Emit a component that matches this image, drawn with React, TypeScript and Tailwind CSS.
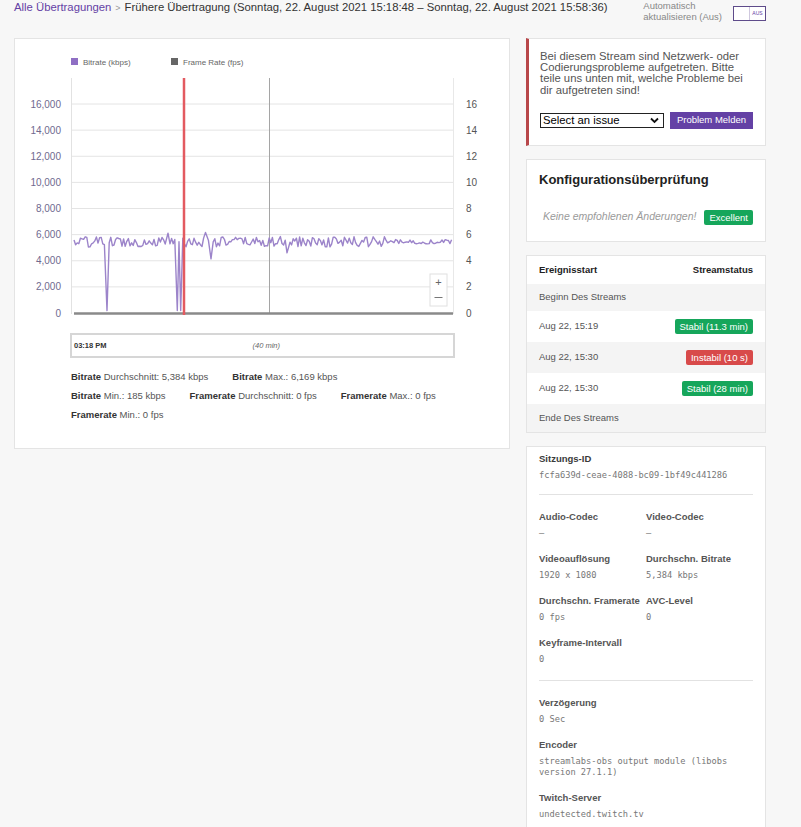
import React from "react";

type Pt = [number, number];

// deterministic noisy bitrate line
function buildSeries(): Pt[] {
  let s = 1234567;
  const rnd = () => {
    s = (s * 16807) % 2147483647;
    return s / 2147483647;
  };
  const special: Pt[] = [
    [107, 185],
    [168, 6120],
    [177.3, 180],
    [179, 5450],
    [180.7, 185],
    [205.5, 6169],
    [211, 4150],
    [287, 4600],
  ];
  const pts: Pt[] = [];
  for (let x = 74; x <= 452; x += 1.6) {
    if (special.some(([sx]) => Math.abs(sx - x) < 1.5)) continue;
    const amp = x > 385 ? 180 : 400;
    const v = 5450 + (rnd() - 0.5) * 2 * amp;
    pts.push([x, v]);
  }
  return [...pts, ...special].sort((a, b) => a[0] - b[0]);
}

const series = buildSeries();
const yOf = (v: number) => 313 - v * (209 / 16000);
const ticks = [0, 1, 2, 3, 4, 5, 6, 7, 8];

function BitrateChart() {
  const line = series.map(([x, v]) => `${x.toFixed(1)},${yOf(v).toFixed(1)}`).join(" ");
  return (
    <svg width={494} height={289} viewBox="15 39 494 289" className="block">
      <rect x={71} y={58} width={7} height={7} fill="#8f6fc4" />
      <text x={83} y={65} fontSize={8} fill="#666">Bitrate (kbps)</text>
      <rect x={171} y={58} width={7} height={7} fill="#666" />
      <text x={183} y={65} fontSize={8} fill="#666">Frame Rate (fps)</text>

      {ticks.slice(1).map((i) => (
        <line key={i} x1={71} x2={453} y1={313 - i * 26.125} y2={313 - i * 26.125} stroke="#e4e4e4" strokeWidth={1} />
      ))}
      <line x1={71.5} x2={71.5} y1={78} y2={314} stroke="#e2e2e2" />
      <line x1={453.5} x2={453.5} y1={78} y2={314} stroke="#e8e8e8" />
      <line x1={269.5} x2={269.5} y1={78} y2={314} stroke="#a5a5a5" />

      {ticks.map((i) => (
        <text key={"l" + i} x={61} y={313 - i * 26.125 + 3.5} fontSize={10} fill="#6f6a8f" textAnchor="end">
          {i === 0 ? "0" : `${i * 2},000`}
        </text>
      ))}
      {ticks.map((i) => (
        <text key={"r" + i} x={466} y={313 - i * 26.125 + 3.5} fontSize={10} fill="#555">
          {i * 2}
        </text>
      ))}

      <line x1={74} x2={453} y1={313.5} y2={313.5} stroke="#8a8a8a" strokeWidth={2.5} />
      <polyline points={line} fill="none" stroke="#9c84ca" strokeWidth={1.4} strokeLinejoin="round" />
      <line x1={184} x2={184} y1={78} y2={315} stroke="#e35a60" strokeWidth={2.5} />

      <rect x={430} y={274} width={17} height={32} fill="#fff" stroke="#e0e0e0" />
      <text x={438.5} y={285.5} fontSize={11} fill="#666" textAnchor="middle">+</text>
      <line x1={434.5} x2={442.5} y1={297.5} y2={297.5} stroke="#777" strokeWidth={1} />
    </svg>
  );
}

function Stat({ label, text }: { label: string; text: string }) {
  return (
    <span>
      <b className="font-bold text-[#333]">{label}</b>
      <span className="text-[#555]"> {text}</span>
    </span>
  );
}

function Badge({ tone, children }: { tone: "green" | "red"; children: React.ReactNode }) {
  return (
    <span
      className={
        tone === "green"
          ? "inline-block h-[15px] rounded-[2px] bg-[#16a65b] px-[5px] text-[9.5px] leading-[15px] text-white"
          : "inline-block h-[15px] rounded-[2px] bg-[#d84a4a] px-[5px] text-[9.5px] leading-[15px] text-white"
      }
    >
      {children}
    </span>
  );
}

function Field({ label, value, dark }: { label: string; value: React.ReactNode; dark?: boolean }) {
  return (
    <div className="mb-[13px]">
      <div className={dark ? "text-[9.5px] font-bold leading-[14px] text-[#3a3a3a]" : "text-[9.5px] font-bold leading-[14px] text-[#555]"}>
        {label}
      </div>
      <div className="mt-[4px] font-['DejaVu_Sans_Mono',monospace] text-[8.7px] leading-[11px] text-[#777]">{value}</div>
    </div>
  );
}

export default function App() {
  return (
    <div className="min-h-[827px] w-[801px] bg-[#f7f7f7] px-[14px] font-['Liberation_Sans',Arial,sans-serif]">
      {/* header */}
      <div className="flex h-[38px] w-[752px] items-start justify-between">
        <div className="text-[11.3px] leading-[14px]">
          <span className="text-[#6441a5]">Alle Übertragungen</span>
          <span className="mx-[4px] text-[9px] text-[#999]">&gt;</span>
          <span className="text-[#333]">Frühere Übertragung (Sonntag, 22. August 2021 15:18:48 – Sonntag, 22. August 2021 15:58:36)</span>
        </div>
        <div className="flex items-start gap-[11px]">
          <div className="mt-[1px] text-[9.5px] leading-[10.5px] text-[#888]">
            Automatisch
            <br />
            aktualisieren (Aus)
          </div>
          <div className="mt-[6px] flex h-[15px] w-[33px] border border-[#5e4b8a] bg-white">
            <div className="w-[15px]" />
            <div className="flex flex-1 items-center justify-center border-l border-[#cfc8de] text-[5px] text-[#6441a5]">AUS</div>
          </div>
        </div>
      </div>

      <div className="flex w-[752px] items-start gap-[16px]">
        {/* left card */}
        <div className="w-[496px] border border-[#e4e4e4] bg-white pb-[24px]">
          <BitrateChart />
          <div className="ml-[55px] mt-[5px] flex h-[25px] w-[385px] items-center border-2 border-[#d6d6d6] pl-[2px] text-[7.5px]">
            <span className="font-bold text-[#333]">03:18 PM</span>
            <span className="ml-[146px] italic text-[#666]">(40 min)</span>
          </div>
          <div className="ml-[56px] mt-[9px] text-[9.5px] leading-[19px]">
            <div className="flex gap-x-[24px]">
              <Stat label="Bitrate" text="Durchschnitt: 5,384 kbps" />
              <Stat label="Bitrate" text="Max.: 6,169 kbps" />
            </div>
            <div className="flex gap-x-[24px]">
              <Stat label="Bitrate" text="Min.: 185 kbps" />
              <Stat label="Framerate" text="Durchschnitt: 0 fps" />
              <Stat label="Framerate" text="Max.: 0 fps" />
            </div>
            <div className="flex gap-x-[24px]">
              <Stat label="Framerate" text="Min.: 0 fps" />
            </div>
          </div>
        </div>

        {/* right column */}
        <div className="flex w-[240px] flex-col gap-[13px]">
          <div className="border border-l-[3px] border-[#e4e4e4] border-l-[#b8474a] bg-white pb-[16px] pl-[11px] pr-[10px] pt-[12px]">
            <p className="text-[11.3px] leading-[11.2px] text-[#555]">
              Bei diesem Stream sind Netzwerk- oder Codierungsprobleme aufgetreten. Bitte teile uns unten mit, welche Probleme bei dir aufgetreten sind!
            </p>
            <div className="mt-[16px] flex items-center gap-[6px]">
              <div className="flex h-[15px] w-[124px] items-center justify-between border border-[#222] bg-white pl-[2px] pr-[4px] text-[11.3px] leading-[13px] text-black">
                <span>Select an issue</span>
                <svg width="9" height="7" viewBox="0 0 9 7">
                  <path d="M1 1.5 L4.5 5 L8 1.5" fill="none" stroke="#111" strokeWidth="1.8" />
                </svg>
              </div>
              <button className="h-[17px] w-[83px] bg-[#6441a5] text-[9.5px] text-white">Problem Melden</button>
            </div>
          </div>

          <div className="border border-[#e4e4e4] bg-white pb-[16px] pl-[12px] pr-[12px] pt-[12px]">
            <h2 className="text-[13px] font-bold leading-[16px] text-[#222]">Konfigurationsüberprüfung</h2>
            <div className="mt-[22px] flex h-[15px] items-center justify-end gap-[8px]">
              <span className="text-[10.5px] italic text-[#9a9a9a]">Keine empfohlenen Änderungen!</span>
              <Badge tone="green">Excellent</Badge>
            </div>
          </div>

          <div className="border border-[#e4e4e4] bg-white text-[9.5px]">
            <div className="flex h-[28px] items-center justify-between pl-[12px] pr-[12px] font-bold text-[#222]">
              <span>Ereignisstart</span>
              <span>Streamstatus</span>
            </div>
            <div className="flex h-[27px] items-center bg-[#f4f4f4] pl-[12px] text-[#555]">Beginn Des Streams</div>
            <div className="flex h-[31px] items-center justify-between pl-[12px] pr-[12px] text-[#555]">
              <span>Aug 22, 15:19</span>
              <Badge tone="green">Stabil (11.3 min)</Badge>
            </div>
            <div className="flex h-[31px] items-center justify-between bg-[#f4f4f4] pl-[12px] pr-[12px] text-[#555]">
              <span>Aug 22, 15:30</span>
              <Badge tone="red">Instabil (10 s)</Badge>
            </div>
            <div className="flex h-[31px] items-center justify-between pl-[12px] pr-[12px] text-[#555]">
              <span>Aug 22, 15:30</span>
              <Badge tone="green">Stabil (28 min)</Badge>
            </div>
            <div className="flex h-[28px] items-center bg-[#f4f4f4] pl-[12px] text-[#555]">Ende Des Streams</div>
          </div>

          <div className="border border-[#e4e4e4] bg-white pl-[12px] pr-[12px] pt-[5px]">
            <Field dark label="Sitzungs-ID" value="fcfa639d-ceae-4088-bc09-1bf49c441286" />
            <div className="mb-[15px] mt-[2px] h-px bg-[#e2e2e2]" />
            <div className="grid grid-cols-2">
              <Field label="Audio-Codec" value="–" />
              <Field label="Video-Codec" value="–" />
              <Field label="Videoauflösung" value="1920 x 1080" />
              <Field label="Durchschn. Bitrate" value="5,384 kbps" />
              <Field label="Durchschn. Framerate" value="0 fps" />
              <Field label="AVC-Level" value="0" />
              <Field label="Keyframe-Intervall" value="0" />
            </div>
            <div className="mb-[15px] mt-[2px] h-px bg-[#e2e2e2]" />
            <Field label="Verzögerung" value="0 Sec" />
            <Field label="Encoder" value="streamlabs-obs output module (libobs version 27.1.1)" />
            <Field label="Twitch-Server" value="undetected.twitch.tv" />
          </div>
        </div>
      </div>
    </div>
  );
}
